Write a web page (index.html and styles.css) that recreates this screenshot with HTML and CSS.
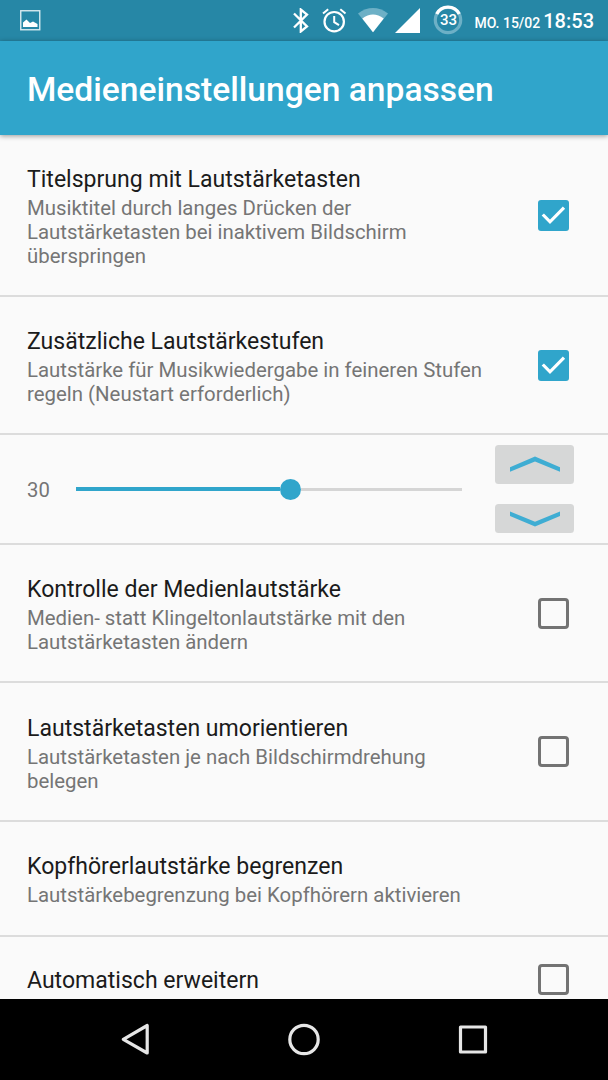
FILE: index.html
```html
<!DOCTYPE html>
<html lang="de">
<head>
    <meta charset="UTF-8">
    <meta name="viewport" content="width=device-width, initial-scale=1.0">
    <title>Medieneinstellungen anpassen</title>
    <link rel="stylesheet" href="styles.css">
</head>
<body>
    <div class="statusbar">
        <svg class="icon-image" width="21" height="21" viewBox="0 0 21 21">
            <rect x="0.75" y="0.75" width="19" height="19" fill="none" stroke="#d8eaf0" stroke-width="1.4"/>
            <path d="M3 17v-4.500l3.500-3 3.500 3.500 3-1.500 4.500 2.500v3z" fill="#fff"/>
        </svg>
        <div class="status-icons">
            <svg width="16" height="25" viewBox="0 0 16 25">
                <path d="M1 5.500l13 13-6.200 5V1.500l6.200 5-13 13" fill="none" stroke="#fff" stroke-width="2.300"/>
            </svg>
            <svg class="icon-alarm" width="25" height="25" viewBox="0 0 25 25">
                <circle cx="12.200" cy="13.700" r="9.700" fill="none" stroke="#fff" stroke-width="2.200"/>
                <path d="M1 5.500l5.200-4.300M23.500 5.500l-5.200-4.300M12.200 8v6.200l4.800 3" fill="none" stroke="#fff" stroke-width="2"/>
            </svg>
            <svg class="icon-wifi" width="30" height="25" viewBox="0 0 30 25">
                <path d="M0 5.400Q15-5.400 30 5.400L15 24.200z" fill="#6db0c6"/>
                <path d="M4.300 10.600Q15 2.200 25.700 10.600L15 24.200z" fill="#fff"/>
            </svg>
            <svg class="icon-signal" width="25" height="25" viewBox="0 0 25 25">
                <path d="M0 25L25 0v25z" fill="#fff"/>
            </svg>
            <div class="battery">
                <svg width="30" height="30" viewBox="0 0 30 30">
                    <circle cx="15" cy="15" r="12.700" fill="none" stroke="#6db0c6" stroke-width="3.200"/>
                    <path d="M3.700 9A12.700 12.700 0 0 1 26.300 9" fill="none" stroke="#fff" stroke-width="3.400"/>
                </svg>
                <span>33</span>
            </div>
            <span class="date">MO. 15/02</span>
            <span class="clock">18:53</span>
        </div>
    </div>

    <header class="toolbar">
        <h1>Medieneinstellungen anpassen</h1>
    </header>

    <main class="settings">
        <label class="row row-three">
            <span class="text">
                <span class="title">Titelsprung mit Lautstärketasten</span>
                <span class="summary">Musiktitel durch langes Drücken der Lautstärketasten bei inaktivem Bildschirm überspringen</span>
            </span>
            <input type="checkbox" checked>
            <svg class="check" viewBox="0 0 31 31"><path d="M4.800 14.500l7.200 7.300L26 7.600"/></svg>
        </label>
        <label class="row">
            <span class="text">
                <span class="title">Zusätzliche Lautstärkestufen</span>
                <span class="summary">Lautstärke für Musikwiedergabe in feineren Stufen regeln (Neustart erforderlich)</span>
            </span>
            <input type="checkbox" checked>
            <svg class="check" viewBox="0 0 31 31"><path d="M4.800 14.500l7.200 7.300L26 7.600"/></svg>
        </label>
        <div class="row volume">
            <span class="value">30</span>
            <div class="slider">
                <div class="filled"></div>
                <div class="thumb"></div>
                <div class="rest"></div>
            </div>
            <div class="steps">
                <button class="up" type="button" aria-label="Lauter">
                    <svg width="50" height="16" viewBox="0 0 50 16"><path d="M0 11.300L25 0.500l25 10.800v4.400L25 5.500 0 15.700z"/></svg>
                </button>
                <button class="down" type="button" aria-label="Leiser">
                    <svg width="50" height="16" viewBox="0 0 50 16"><path d="M0 0.500L25 10.700 50 0.500v4.400L25 15.500 0 4.900z"/></svg>
                </button>
            </div>
        </div>
        <label class="row">
            <span class="text">
                <span class="title">Kontrolle der Medienlautstärke</span>
                <span class="summary">Medien- statt Klingeltonlautstärke mit den Lautstärketasten ändern</span>
            </span>
            <input type="checkbox">
            <span class="check"></span>
        </label>
        <label class="row row-wide">
            <span class="text">
                <span class="title">Lautstärketasten umorientieren</span>
                <span class="summary">Lautstärketasten je nach Bildschirmdrehung belegen</span>
            </span>
            <input type="checkbox">
            <span class="check"></span>
        </label>
        <div class="row row-single">
            <span class="text">
                <span class="title">Kopfhörerlautstärke begrenzen</span>
                <span class="summary">Lautstärkebegrenzung bei Kopfhörern aktivieren</span>
            </span>
        </div>
        <label class="row row-last">
            <span class="text">
                <span class="title">Automatisch erweitern</span>
            </span>
            <input type="checkbox">
            <span class="check"></span>
        </label>
    </main>

    <nav class="navbar">
        <svg width="608" height="81" viewBox="0 0 608 81" fill="none" stroke="#e6e6e6" stroke-width="3.200" stroke-linejoin="round">
            <path d="M147.200 26.500v27.500L123.300 40.300z"/>
            <circle cx="304" cy="40.500" r="14.200"/>
            <rect x="460.500" y="28" width="25" height="25"/>
        </svg>
    </nav>
</body>
</html>
```

FILE: styles.css
```css
* {
    box-sizing: border-box;
}
body {
    margin: 0;
    height: 1080px;
    display: flex;
    flex-direction: column;
    overflow: hidden;
    background-color: #fafafa;
    font-family: Roboto, "Liberation Sans", sans-serif;
}
svg {
    display: block;
}
.statusbar {
    flex: none;
    height: 41px;
    padding: 0 14px 0 20px;
    display: flex;
    align-items: center;
    justify-content: space-between;
    background-color: #2687a6;
    color: white;
}
.status-icons {
    display: flex;
    align-items: center;
}
.icon-alarm {
    margin-left: 13px;
}
.icon-wifi {
    margin-left: 11px;
}
.icon-signal {
    margin-left: 7px;
}
.battery {
    display: grid;
    place-items: center;
    margin: -2px 0 0 13px;
    font-size: 15px;
    font-weight: 500;
    line-height: 30px;
}
.battery > * {
    grid-area: 1 / 1;
}
.date {
    margin: 5px 0 0 11px;
    font-size: 14px;
    font-weight: 500;
}
.clock {
    margin: 1px 0 0 3px;
    font-size: 20px;
    font-weight: 500;
}
.toolbar {
    flex: none;
    position: relative;
    height: 94px;
    padding: 0 27px;
    display: flex;
    align-items: center;
    background-color: #30a5cb;
    color: white;
    box-shadow: 0 1px 5px rgba(0, 0, 0, 0.4);
}
h1 {
    margin: 2px 0 0;
    font-size: 33.600px;
    font-weight: 500;
}
.settings {
    flex: 1;
    min-height: 0;
    overflow: hidden;
}
.row {
    display: flex;
    align-items: center;
    justify-content: space-between;
    height: 138px;
    padding: 0 39px 0 27px;
    border-bottom: 2px solid #dcdcdc;
}
.row-three {
    height: 162px;
}
.row-wide {
    height: 139px;
}
.row-single {
    height: 115px;
}
.row-last {
    height: 85px;
    border-bottom: none;
}
.text {
    width: 470px;
    padding-top: 4px;
}
.row-single .text {
    padding-top: 2px;
}
.row-last .text {
    padding-top: 3px;
}
.title {
    display: block;
    font-size: 23.050px;
    line-height: 30px;
    color: #1b1b1b;
}
.summary {
    display: block;
    margin-top: 2px;
    font-size: 20.400px;
    line-height: 23.700px;
    color: #757575;
}
.row input {
    display: none;
}
.check {
    flex: none;
    width: 31px;
    height: 31px;
    border: 3.400px solid #737373;
    border-radius: 4px;
}
input:checked + .check {
    border: none;
    border-radius: 3px;
    background-color: #30a5cb;
}
.check path {
    fill: none;
    stroke: white;
    stroke-width: 3.200;
}
.volume {
    height: 110px;
    padding: 0 34px 0 27px;
    justify-content: flex-start;
}
.value {
    width: 49px;
    padding-top: 2px;
    font-size: 20.300px;
    color: #757575;
}
.slider {
    display: flex;
    align-items: center;
    width: 386px;
}
.filled {
    width: 204px;
    height: 4px;
    background-color: #30a5cb;
}
.thumb {
    width: 21px;
    height: 21px;
    border-radius: 50%;
    background-color: #30a5cb;
}
.rest {
    flex: 1;
    height: 3px;
    background-color: #d5d5d5;
}
.steps {
    margin-left: auto;
    display: flex;
    flex-direction: column;
    gap: 20px;
}
.steps button {
    display: flex;
    justify-content: center;
    width: 79px;
    padding: 0;
    border: none;
    border-radius: 3.500px;
    background-color: #d6d7d7;
}
.steps path {
    fill: #3fadd3;
}
.steps .up {
    height: 39px;
    padding-top: 11px;
}
.steps .down {
    height: 29px;
    padding-top: 7px;
}
.navbar {
    flex: none;
    height: 81px;
    background-color: black;
}
```
